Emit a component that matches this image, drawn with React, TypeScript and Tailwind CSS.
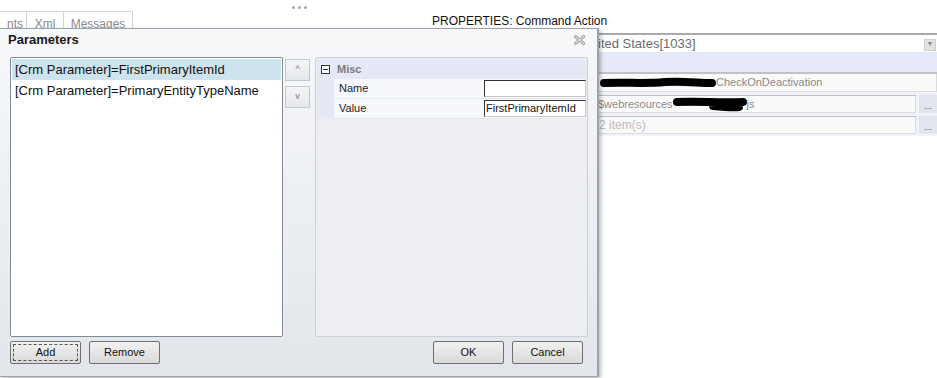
import React from "react";

const font = "font-['Liberation_Sans',Arial,sans-serif]";

const btnCls =
  "h-[23px] w-[71px] rounded-[2px] border border-[#707070] bg-gradient-to-b from-[#f2f2f2] to-[#d9d9d9] text-[11px] text-[#111] flex items-center justify-center";

const Redact: React.FC<{ w: number; h: number; d: string; sw: number }> = ({ w, h, d, sw }) => (
  <svg width={w} height={h} className="shrink-0 overflow-visible">
    <path d={d} stroke="#000" strokeWidth={sw} strokeLinecap="round" strokeLinejoin="round" fill="none" />
  </svg>
);

const CloseIcon = () => (
  <svg width="11" height="10" viewBox="0 0 11 10">
    <path d="M1.5 1.5 L9.5 8.5 M9.5 1.5 L1.5 8.5" stroke="#a4a4a4" strokeWidth="3" strokeLinecap="square" />
    <path d="M1.5 1.5 L9.5 8.5 M9.5 1.5 L1.5 8.5" stroke="#f6f7f9" strokeWidth="1" strokeLinecap="square" />
  </svg>
);

const Background = () => (
  <div className="flex">
    {/* left: dots + tabs */}
    <div className="w-[432px] shrink-0">
      <div className="h-[11px] flex items-start pl-[292px] gap-[3px] pt-[6px]">
        <span className="w-[3px] h-[3px] rounded-full bg-[#a8a8a8]" />
        <span className="w-[3px] h-[3px] rounded-full bg-[#a8a8a8]" />
        <span className="w-[3px] h-[3px] rounded-full bg-[#a8a8a8]" />
      </div>
      <div className="flex h-[22px] text-[12px] text-[#8a8a8a]">
        <div className="w-[27px] border-t border-r border-[#d4d4d4] flex justify-end pr-[3px] pt-[3px]">nts</div>
        <div className="w-[37px] border-t border-r border-[#d4d4d4] flex justify-center pt-[3px]">Xml</div>
        <div className="w-[69px] border-t border-r border-[#d4d4d4] flex justify-center pt-[3px]">Messages</div>
      </div>
    </div>
    {/* right: properties */}
    <div className="flex-1">
      <div className="h-[33px] pt-[14px] text-[12px] text-[#111] leading-[14px]">PROPERTIES: Command Action</div>
      <div className="ml-[158px] border-t-2 border-[#a9a9a9]">
        <div className="h-[17px] flex items-center bg-white pl-[8px] pr-[1px]">
          <span className="flex-1 text-[13px] text-[#6b6b6b] leading-none">ited States[1033]</span>
          <span className="w-[12px] h-[12px] bg-[#e2e2e2] border border-[#cfcfcf] flex items-center justify-center mt-[2px] text-[7px] text-[#888]">▼</span>
        </div>
        <div className="h-[22px] bg-[#e6e9f7] border-b-2 border-[#c2c2c2]" />
        <div className="h-[18px] bg-[#fafafa] border-b border-r border-[#dcdcdc] flex items-center pl-[10px] text-[11px] text-[#8a8a8a]">
          <Redact w={116} h={14} sw={8} d="M4 7 C25 6 45 8 65 6 C85 5 98 7 112 7" />
          <span>CheckOnDeactivation</span>
        </div>
        <div className="bg-[#f1f3fb] pt-[3px] pb-[2px] flex flex-col gap-[3px]">
          <div className="flex h-[18px] gap-[3px]">
            <div className="flex-1 bg-[#fafafa] border border-[#dcdcdc] border-t-[#bdbdbd] flex items-center pl-[7px] text-[11px] text-[#8a8a8a]">
              <span>$webresources</span>
              <Redact w={74} h={16} sw={8} d="M4 6 C25 5 45 7 70 6 M40 10 C50 11 60 12 66 11" />
              <span>js</span>
            </div>
            <div className="w-[18px] bg-[#e3e6ee] flex items-end justify-center pb-[2px] text-[9px] leading-none text-[#444]">...</div>
          </div>
          <div className="flex h-[18px] gap-[3px]">
            <div className="flex-1 bg-[#fafafa] border border-[#dcdcdc] border-t-[#bdbdbd] flex items-center pl-[8px] text-[12px] text-[#bcbcbc]">
              2 item(s)
            </div>
            <div className="w-[18px] bg-[#e3e6ee] flex items-end justify-center pb-[2px] text-[9px] leading-none text-[#444]">...</div>
          </div>
        </div>
      </div>
    </div>
  </div>
);

const Dialog = () => (
  <div className="absolute left-0 top-[28px] w-[599px] h-[349px] border-t border-r-2 border-b border-[#9aa3ad] bg-gradient-to-b from-[#f7f8fa] to-[#e2e6eb] shadow-[2px_2px_4px_rgba(0,0,0,0.25)] flex flex-col">
    {/* title */}
    <div className="h-[28px] flex items-start justify-between pl-[8px] pr-[12px] pt-[1px]">
      <span className="text-[13px] font-bold text-[#1a1a1a]">Parameters</span>
      <span className="mt-[5px]"><CloseIcon /></span>
    </div>
    {/* body */}
    <div className="flex h-[280px] pl-[10px]">
      <div className="w-[273px] h-full border border-[#838b95] rounded-[2px] bg-white p-[1px] text-[13px] text-[#111]">
        <div className="h-[21px] bg-[#cde3ed] pl-[3px] flex items-center">[Crm Parameter]=FirstPrimaryItemId</div>
        <div className="h-[21px] pl-[3px] flex items-center">[Crm Parameter]=PrimaryEntityTypeName</div>
      </div>
      <div className="ml-[2px] w-[25px] pt-[2px] flex flex-col gap-[5px]">
        <div className="h-[22px] border border-[#c3c8ce] bg-gradient-to-b from-[#f4f5f7] to-[#e6e9ec] flex items-center justify-center text-[9px] text-[#777]">^</div>
        <div className="h-[22px] border border-[#c3c8ce] bg-gradient-to-b from-[#f4f5f7] to-[#e6e9ec] flex items-center justify-center text-[9px] text-[#777]">v</div>
      </div>
      <div className="ml-[5px] w-[273px] h-full border border-[#cdd1d6] rounded-[2px] bg-[#eceef1] p-[1px] text-[11px]">
        <div className="h-[20px] bg-[#e6e8f8] flex items-center pl-[4px]">
          <span className="w-[9px] h-[9px] border border-[#333] flex items-center justify-center bg-white">
            <span className="w-[5px] h-[1px] bg-[#333]" />
          </span>
          <span className="ml-[7px] font-bold text-[#7a7a7a]">Misc</span>
        </div>
        {[
          ["Name", ""],
          ["Value", "FirstPrimaryItemId"],
        ].map(([label, val]) => (
          <div key={label} className="h-[20px] flex">
            <div className="w-[17px] bg-[#e6e8f8]" />
            <div className="w-[150px] bg-[#f7f8fc] border-b border-[#e6e8f0] flex items-center pl-[5px] text-[#222]">{label}</div>
            <div className="flex-1 py-[1px] bg-[#f7f8fc] border-b border-[#e6e8f0]">
              <div className="h-full bg-white border border-[#c8c8c8] border-t-[#333] border-l-[#333] flex items-center pl-[1px] text-[#111]">
                {val}
              </div>
            </div>
          </div>
        ))}
      </div>
    </div>
    {/* footer */}
    <div className="flex mt-[4px] pl-[10px]">
      <div className={`${btnCls} border-[#111] p-[2px]`}>
        <div className="w-full h-full border border-dashed border-[#555] flex items-center justify-center">Add</div>
      </div>
      <div className={`${btnCls} ml-[8px]`}>Remove</div>
      <div className={`${btnCls} ml-[273px]`}>OK</div>
      <div className={`${btnCls} ml-[8px]`}>Cancel</div>
    </div>
  </div>
);

export default function App() {
  return (
    <div className={`relative w-[937px] h-[378px] bg-white overflow-hidden ${font}`}>
      <Background />
      <Dialog />
    </div>
  );
}
